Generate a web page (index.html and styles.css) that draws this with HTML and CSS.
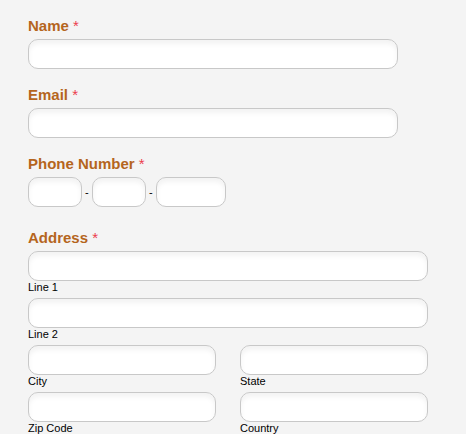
FILE: index.html
```html
<!DOCTYPE html>
<html lang="en">
<head>
    <meta charset="UTF-8">
    <title>Contact Form</title>
    <meta name="viewport" content="width=device-width, initial-scale=1.0">
    <link rel="stylesheet" href="styles.css">
</head>
<body>
    <form class="form">
        <div class="field">
            <label class="label">Name <span class="req">*</span></label>
            <input class="input wide" type="text">
        </div>

        <div class="field">
            <label class="label">Email <span class="req">*</span></label>
            <input class="input wide" type="text">
        </div>

        <div class="field phone">
            <label class="label">Phone Number <span class="req">*</span></label>
            <div class="phone-row">
                <input class="input area" type="text">
                <span class="dash">-</span>
                <input class="input area" type="text">
                <span class="dash">-</span>
                <input class="input last" type="text">
            </div>
        </div>

        <div class="field">
            <label class="label">Address <span class="req">*</span></label>
            <div class="address">
                <div class="part full">
                    <input class="input" type="text">
                    <span class="sub">Line 1</span>
                </div>
                <div class="part full">
                    <input class="input" type="text">
                    <span class="sub">Line 2</span>
                </div>
                <div class="part">
                    <input class="input" type="text">
                    <span class="sub">City</span>
                </div>
                <div class="part">
                    <input class="input" type="text">
                    <span class="sub">State</span>
                </div>
                <div class="part">
                    <input class="input" type="text">
                    <span class="sub">Zip Code</span>
                </div>
                <div class="part">
                    <input class="input" type="text">
                    <span class="sub">Country</span>
                </div>
            </div>
        </div>
    </form>
</body>
</html>
```

FILE: styles.css
```css
body {
    margin: 0;
    background-color: #f4f4f4;
    font-family: "Liberation Sans", Arial, sans-serif;
}
.form {
    padding: 17px 28px;
}
.field {
    margin-bottom: 17px;
}
.field.phone {
    margin-bottom: 22px;
}
.label {
    display: block;
    font-size: 15px;
    line-height: 18px;
    font-weight: bold;
    color: #b5651d;
    margin-bottom: 4px;
}
.req {
    color: #ec3c4c;
    font-weight: normal;
}
.input {
    display: block;
    box-sizing: border-box;
    height: 30px;
    width: 100%;
    margin: 0;
    padding: 4px 8px;
    background-color: #fff;
    border: 1px solid #c8c8c8;
    border-radius: 10px;
    box-shadow: inset 0 4px 5px rgba(0, 0, 0, 0.05);
    font-family: inherit;
    font-size: 13px;
    outline: none;
}
.input.wide {
    width: 370px;
}
.phone-row {
    display: flex;
    align-items: center;
    gap: 3px;
}
.input.area {
    width: 54px;
}
.input.last {
    width: 70px;
}
.dash {
    width: 4px;
    font-size: 11px;
    color: #000;
}
.address {
    display: grid;
    grid-template-columns: 188px 188px;
    column-gap: 24px;
    width: 400px;
}
.part.full {
    grid-column: 1 / span 2;
}
.sub {
    display: block;
    font-size: 11px;
    line-height: 13px;
    color: #000;
    margin-bottom: 4px;
}
```
